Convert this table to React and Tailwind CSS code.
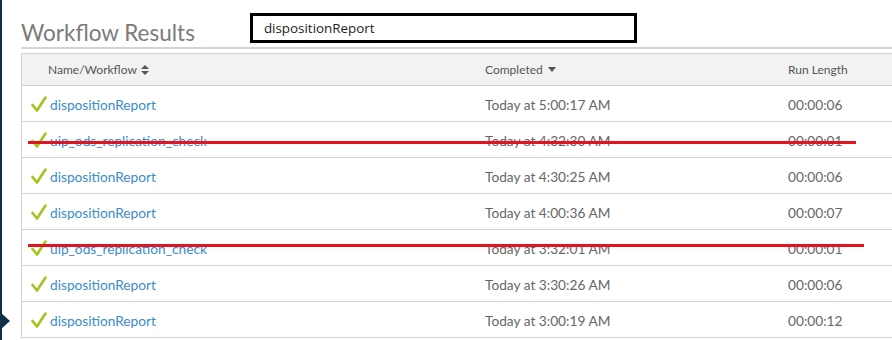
import React from 'react'

const rows = [
  { name: 'dispositionReport', done: 'Today at 5:00:17 AM', len: '00:00:06' },
  { name: 'uip_ods_replication_check', done: 'Today at 4:32:30 AM', len: '00:00:01', struck: 'top-[19px] w-[828px]' },
  { name: 'dispositionReport', done: 'Today at 4:30:25 AM', len: '00:00:06' },
  { name: 'dispositionReport', done: 'Today at 4:00:36 AM', len: '00:00:07' },
  { name: 'uip_ods_replication_check', done: 'Today at 3:32:01 AM', len: '00:00:01', struck: 'top-[14px] w-[836px]' },
  { name: 'dispositionReport', done: 'Today at 3:30:26 AM', len: '00:00:06' },
  { name: 'dispositionReport', done: 'Today at 3:00:19 AM', len: '00:00:12' },
]

const Check = () => (
  <svg width="16" height="17" viewBox="0 0 16 17" className="shrink-0">
    <path d="M1.5 9 L6 14.5 L14.5 1.5" fill="none" stroke="#a3c41e" strokeWidth="2.6" strokeLinecap="round" strokeLinejoin="round" />
  </svg>
)

const App = () => {
  return (
    <div className="relative flex h-[340px] w-[892px] overflow-hidden bg-white" style={{ fontFamily: 'Lato, "Open Sans", sans-serif' }}>
      <div className="w-[2px] shrink-0 bg-[#0e3048]" />
      <div className="absolute left-0 top-[312px] h-0 w-0 border-y-[9px] border-l-[10px] border-y-transparent border-l-[#0e3048]" />

      <div className="flex-1 pl-[19px]">
        <div className="flex h-[49px] items-end border-b-2 border-[#d4d4d4]">
          <h1 className="text-[22.5px] leading-[28px] text-[#7b7b7b]">Workflow Results</h1>
          <div className="mb-[4px] ml-[55px] flex h-[30px] w-[387px] items-center border-[3px] border-black pl-[11px] text-[13.4px] text-[#222]" style={{ fontFamily: '"Open Sans", sans-serif' }}>
            dispositionReport
          </div>
        </div>

        <div className="mt-[4px] border-l border-t border-[#d4d4d4]">
          <div className="grid h-[32px] grid-cols-[463px_303px_1fr] items-center border-b border-[#d4d4d4] bg-[#f2f2f2] text-[12px] text-[#555]">
            <div className="flex items-center gap-[4px] pl-[26px]">
              Name/Workflow
              <svg width="8" height="10" viewBox="0 0 8 10"><path d="M4 0 L8 4 H0Z M0 6 H8 L4 10Z" fill="#555" /></svg>
            </div>
            <div className="flex items-center gap-[5px]">
              Completed
              <svg width="8" height="5" viewBox="0 0 8 5"><path d="M0 0 H8 L4 5Z" fill="#555" /></svg>
            </div>
            <div>Run Length</div>
          </div>

          {rows.map((r, i) => (
            <div key={i} className="relative grid h-[36px] grid-cols-[463px_303px_1fr] items-center border-b border-[#d4d4d4] pt-[3px] text-[13.7px] text-[#666]">
              <div className="flex items-center gap-[3px] pl-[9px]">
                <Check />
                <span className="text-[#3b8ccb]">{r.name}</span>
              </div>
              <div>{r.done}</div>
              <div>{r.len}</div>
              {r.struck && (
                <div className={`absolute left-[6px] h-[3px] bg-[#e3141f] ${r.struck}`} />
              )}
            </div>
          ))}
        </div>
      </div>
    </div>
  )
}

export default App
